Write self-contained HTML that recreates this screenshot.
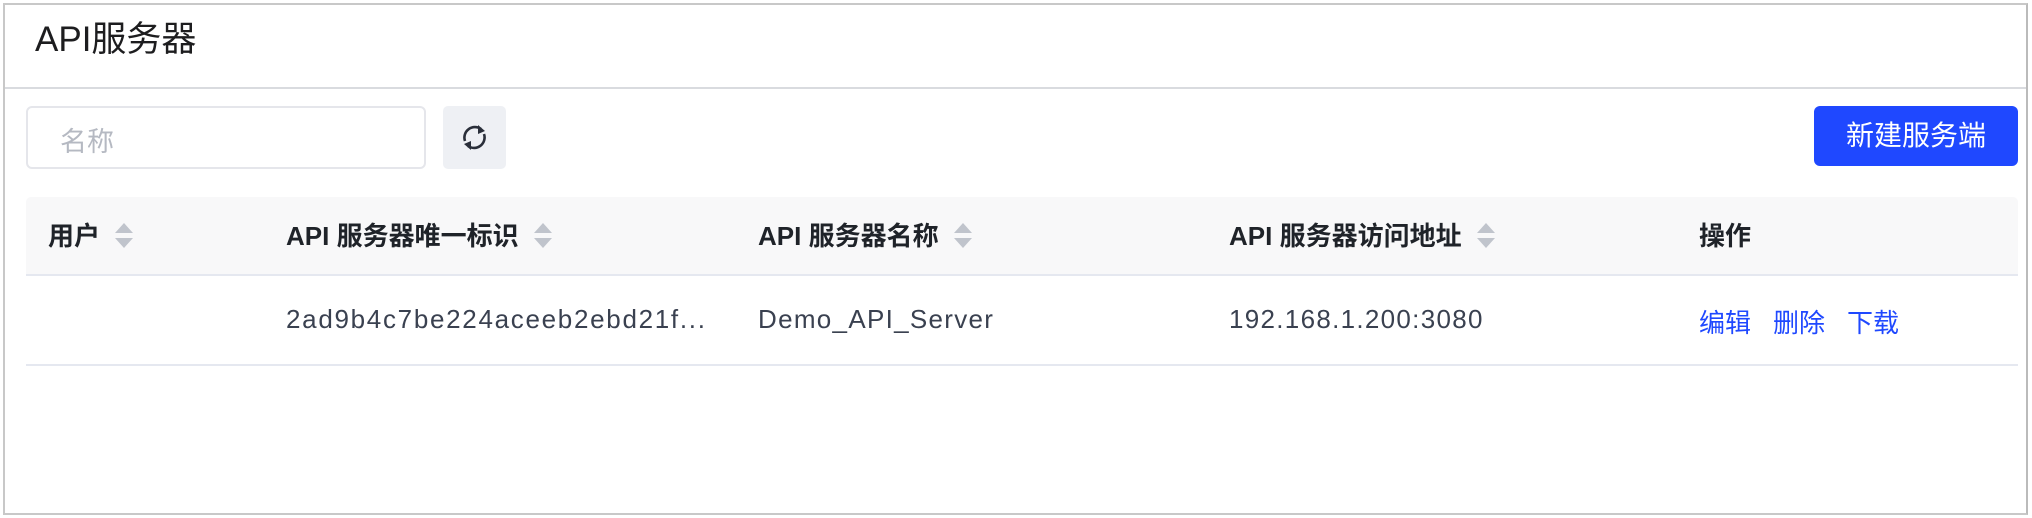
<!DOCTYPE html>
<html><head><meta charset="utf-8"><style>
*{margin:0;padding:0;box-sizing:border-box}
body{width:2032px;height:518px;background:#fff;font-family:"Liberation Sans","Noto Sans CJK SC",sans-serif;position:relative;overflow:hidden}
.frame{position:absolute;left:3px;top:3px;width:2025px;height:512px;border:2px solid #c8c8c8;border-right-color:#bbb}
.title{position:absolute;left:35px;top:11px;font-size:35px;color:#1d1d1f}
.hr{position:absolute;left:5px;right:6px;top:87px;height:2px;background:#d9dbdf}
.input{position:absolute;left:26px;top:106px;width:400px;height:63px;border:2px solid #e5e6eb;border-radius:6px;font-size:27px;color:#b5b9c2;padding:12px 0 0 32px}
.ref{position:absolute;left:443px;top:106px;width:63px;height:63px;background:#eef0f4;border-radius:5px}
.btn{position:absolute;left:1814px;top:106px;width:204px;height:60px;background:#1f48ff;border-radius:6px;color:#fff;font-size:28px;text-align:center;line-height:60px}
.th{position:absolute;left:26px;top:197px;width:1992px;height:79px;background:#f8f8f9;border-bottom:2px solid #e5e8f0;border-radius:5px 5px 0 0}
.line{position:absolute;left:26px;width:1992px;top:364px;height:2px;background:#e5e8f0}
.h{position:absolute;top:216px;font-size:26px;font-weight:bold;color:#1f2329;white-space:nowrap}
.c{position:absolute;top:304px;font-size:26px;color:#3a4150;white-space:nowrap;letter-spacing:1.3px}
.a{color:#1f48ff;margin-right:22px;letter-spacing:0}
.s{display:inline-block;width:20px;height:30px;vertical-align:-6px;margin-left:14px}
</style></head><body>
<div class="frame"></div>
<div class="title">API服务器</div>
<div class="hr"></div>
<div class="input">名称</div>
<div class="ref"><svg width="63" height="63" viewBox="0 0 63 63"><g fill="none" stroke="#2a2f3a" stroke-width="2.6"><path d="M22 35 A10.5 10.5 0 0 1 38 23"/><path d="M41 28 A10.5 10.5 0 0 1 25 40"/></g><path d="M35 19 L42 25 L35 28 Z M28 44 L21 38 L28 35 Z" fill="#2a2f3a"/></svg></div>
<div class="btn">新建服务端</div>
<div class="th"></div>
<div class="line"></div>
<svg width="0" height="0"><defs><g id="srt"><path d="M10 2 L19 12 L1 12 Z M1 17 L19 17 L10 27 Z" fill="#c0c4cc"/></g></defs></svg>
<div class="h" style="left:48px">用户<svg class="s"><use href="#srt"/></svg></div>
<div class="h" style="left:286px">API 服务器唯一标识<svg class="s"><use href="#srt"/></svg></div>
<div class="h" style="left:758px">API 服务器名称<svg class="s"><use href="#srt"/></svg></div>
<div class="h" style="left:1229px">API 服务器访问地址<svg class="s"><use href="#srt"/></svg></div>
<div class="h" style="left:1699px">操作</div>
<div class="c" style="left:286px;letter-spacing:1.7px">2ad9b4c7be224aceeb2ebd21f...</div>
<div class="c" style="left:758px">Demo_API_Server</div>
<div class="c" style="left:1229px">192.168.1.200:3080</div>
<div class="c" style="left:1699px;top:303px"><span class="a">编辑</span><span class="a">删除</span><span class="a">下载</span></div>
</body></html>
